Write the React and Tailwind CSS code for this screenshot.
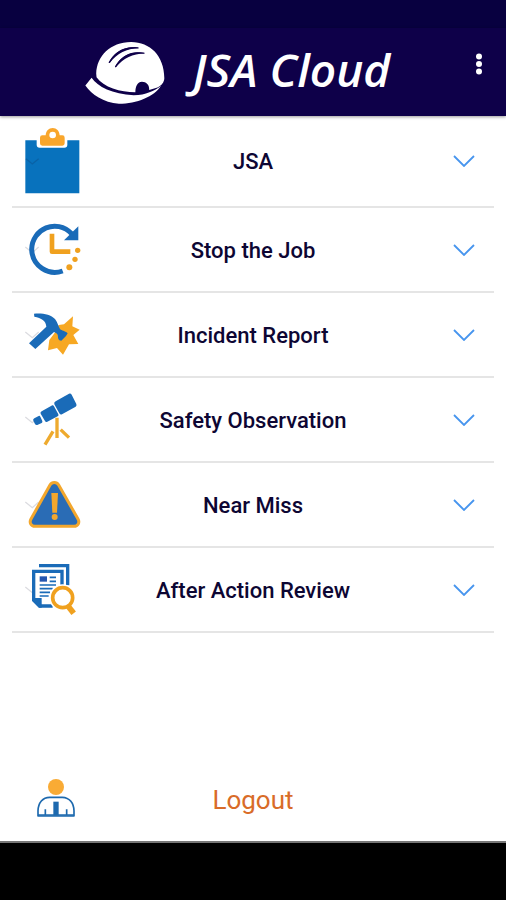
import React, { useState } from 'react';

const BLUE = '#1a6bb8';
const ORANGE = '#f0a11f';

const HelmetLogo = () => (
  <svg viewBox="42 120 243 198" className="w-20 shrink-0" aria-hidden="true">
    <path
      fill="#fff"
      d="M76 222C78 168 118 127 182 126C240 127 282 166 283 236C282 250 274 258 262 264L237 272C238 256 228 247 215 247C202 248 195 259 195 279C150 278 98 264 77 233Z"
    />
    <path fill="#fff" d="M62 235C80 262 125 285 190 288C228 287 252 275 273 259C252 292 200 314 145 314C98 309 62 286 43 258Z" />
    <g fill="#10004a">
      <path d="M114 190C128 157 164 135 205 144C168 146 140 160 118 188Z" />
      <path d="M133 203C148 170 182 149 223 160C186 162 160 174 137 201Z" />
    </g>
    <g fill="none" stroke="#10004a" strokeLinecap="round" strokeWidth="4">
      <path d="M116 188C134 158 164 141 203 144" />
      <path d="M135 201C152 172 182 156 221 160" />
    </g>
  </svg>
);

const ClipboardIcon = () => (
  <svg viewBox="66 34 180 210" className="w-[60px] h-[70px]" aria-hidden="true">
    <path fill="#0872bd" d="M76 77H110V90Q110 99 119 99H193Q202 99 202 90V77H238V236H76Z" />
    <path fill="none" stroke="#0a62a6" strokeWidth="4" d="M78 132L97 148L116 132" />
    <path
      fill="#f9a62b"
      fillRule="evenodd"
      d="M127 62H137C138 49 146 40 158 40C170 40 178 49 179 62H187Q194 62 194 69V86Q194 93 187 93H127Q120 93 120 86V69Q120 62 127 62ZM158 51A10 10 0 1 0 158 71A10 10 0 1 0 158 51Z"
    />
  </svg>
);

// square icons share one frame, with the faint tick mark behind the drawing
const IconFrame = ({ children }) => (
  <svg viewBox="66 45 180 180" className="w-[60px] h-[60px]" aria-hidden="true">
    <path fill="none" stroke="#dcdce0" strokeWidth="4" d="M76 126L97 143L116 126" />
    {children}
  </svg>
);

const ClockIcon = () => (
  <IconFrame>
    <path fill="none" stroke={BLUE} strokeWidth="15" d="M188 198C145 213 97 184 95 133C96 72 169 38 216 87" />
    <path fill={BLUE} d="M235 64V106H192Z" />
    <path fill="none" stroke={ORANGE} strokeWidth="14" strokeLinejoin="round" d="M156 86V140H211" />
    <g fill={ORANGE}>
      <circle cx="233" cy="136" r="8" />
      <circle cx="225" cy="163" r="8" />
      <circle cx="208" cy="187" r="9" />
    </g>
  </IconFrame>
);

const HammerIcon = () => (
  <IconFrame>
    <path
      fill="#f7a823"
      d="M219 79L217 109L239 119L220 135L235 162L207 163L189 194L171 174L144 181L148 150L166 126L176 105L192 103Z"
    />
    <path
      fill={BLUE}
      d="M102 71C128 69 152 73 165 87C173 96 174 108 180 117C186 123 194 121 203 130L198 138L184 152L178 151C170 143 178 137 169 130L162 126L106 177L87 160L139 110C138 92 124 84 103 80Z"
    />
  </IconFrame>
);

const TelescopeIcon = () => (
  <IconFrame>
    <g fill={BLUE}>
      <path d="M167 79L207 56Q212 54 215 59L229 87Q231 92 227 95L186 118Q181 120 178 115L163 88Q161 82 167 79Z" />
      <path d="M125 109L157 91Q160 90 162 94L175 118Q177 122 173 124L142 140Q137 142 135 138L122 116Q120 112 125 109Z" />
      <path d="M103 130L116 123Q119 121 121 125L127 138Q128 142 125 144L112 150Q107 151 105 147L100 137Q98 133 103 130Z" />
    </g>
    <path fill="none" stroke="#eeaa2e" strokeWidth="10" d="M171 128V189M159 169L135 209M182 164L207 188" />
  </IconFrame>
);

const WarningIcon = () => (
  <IconFrame>
    <path
      fill="#2a6cb5"
      stroke="#f3a72d"
      strokeWidth="9"
      strokeLinejoin="round"
      d="M150 75C156 65 170 65 176 75L234 177C240 188 234 199 222 199H105C93 199 87 188 93 177Z"
    />
    <path fill="#f3a72d" d="M154 99H174L171 158H157Z" />
    <circle cx="164" cy="171" r="9" fill="#f3a72d" />
  </IconFrame>
);

const ReviewIcon = () => (
  <IconFrame>
    <path fill="none" stroke={BLUE} strokeWidth="10" d="M117 62H203V121" />
    <path fill="#fff" stroke={BLUE} strokeWidth="10" d="M158 183H119L101 165V79H186V128" />
    <path fill={BLUE} d="M97 159H125V188H117L97 168Z" />
    <path fill="#2456b0" d="M119 94H141V110H119Z" />
    <path fill="none" stroke={BLUE} strokeWidth="5" d="M149 97H168M149 109H168M119 120H168M119 131H158M119 142H150M119 153H146" />
    <path stroke="#fff" strokeWidth="24" d="M204 182L223 205" />
    <circle cx="188" cy="158" r="31" fill="#fff" stroke="#fff" strokeWidth="18" />
    <circle cx="188" cy="158" r="30" fill="#fff" stroke={ORANGE} strokeWidth="11" />
    <path stroke={ORANGE} strokeWidth="17" d="M204 183L221 205" />
  </IconFrame>
);

const PersonIcon = () => (
  <svg viewBox="108 84 118 120" className="w-10 h-10" aria-hidden="true">
    <circle cx="167" cy="111" r="24" fill="#f9ab35" />
    <path
      fill="#fff"
      stroke="#1d69ae"
      strokeWidth="5"
      strokeLinejoin="round"
      d="M113 198V182C114 158 127 142 148 142H186C207 143 220 158 221 182V198Z"
    />
    <path fill="none" stroke="#1d69ae" strokeWidth="5" d="M113 195H221M135 178V196M199 178V196" />
    <path fill="#1d69ae" d="M159 155H175V196H159Z" />
  </svg>
);

const ChevronIcon = ({ open }) => (
  <svg viewBox="0 0 22 12" className={open ? 'w-[22px] rotate-180' : 'w-[22px]'} aria-hidden="true">
    <path fill="none" stroke="#4795ee" strokeWidth="1.8" d="M1 1L11 11L21 1" />
  </svg>
);

const sections = [
  { title: 'JSA', Icon: ClipboardIcon },
  { title: 'Stop the Job', Icon: ClockIcon },
  { title: 'Incident Report', Icon: HammerIcon },
  { title: 'Safety Observation', Icon: TelescopeIcon },
  { title: 'Near Miss', Icon: WarningIcon },
  { title: 'After Action Review', Icon: ReviewIcon },
];

const App = () => {
  const [open, setOpen] = useState(null);

  return (
    <div className="min-h-screen flex flex-col bg-white font-[Roboto,sans-serif]">
      {/* Header */}
      <div className="h-7 bg-[#080040]" />
      <header className="h-[88px] flex items-center bg-[#0e0049] text-white shadow-[0_1px_3px_rgba(0,0,0,0.4)]">
        <div className="flex-1 flex items-center justify-center gap-7 pl-3 pt-0.5">
          <HelmetLogo />
          <h1 className="text-[46px] leading-none font-semibold italic whitespace-nowrap pb-2 font-['Open_Sans',sans-serif]">
            JSA Cloud
          </h1>
        </div>
        <button type="button" aria-label="More options" className="w-8 mr-[11px] mb-4 flex justify-center">
          <svg viewBox="0 0 6 22" className="w-[6px] h-[22px]" fill="#fff" aria-hidden="true">
            <circle cx="3" cy="3.5" r="3" />
            <circle cx="3" cy="11" r="3" />
            <circle cx="3" cy="18.5" r="3" />
          </svg>
        </button>
      </header>

      {/* Sections */}
      <main className="flex-1 px-3">
        <ul>
          {sections.map(({ title, Icon }, i) => (
            <li key={title} className="border-b-2 border-[#e5e5e5]">
              <button
                type="button"
                aria-expanded={open === i}
                onClick={() => setOpen(open === i ? null : i)}
                className={`w-full grid grid-cols-[60px_1fr_60px] items-center px-[10px] ${i === 0 ? 'h-[90px]' : 'h-[83px]'}`}
              >
                <Icon />
                <span className="pt-0.5 text-[22px] leading-7 font-medium text-[#0d0633]">{title}</span>
                <span className="flex justify-end pr-[9px]">
                  <ChevronIcon open={open === i} />
                </span>
              </button>
            </li>
          ))}
        </ul>
      </main>

      {/* Logout */}
      <footer className="px-3 pb-[19px]">
        <button type="button" className="w-full grid grid-cols-[60px_1fr_60px] items-center px-[10px]">
          <span className="flex justify-center pl-2 pb-1">
            <PersonIcon />
          </span>
          <span className="text-[26px] leading-9 text-[#d96c28]">Logout</span>
        </button>
      </footer>
      <div className="h-[59px] bg-black border-t-2 border-[#777]" />
    </div>
  );
};

export default App;
